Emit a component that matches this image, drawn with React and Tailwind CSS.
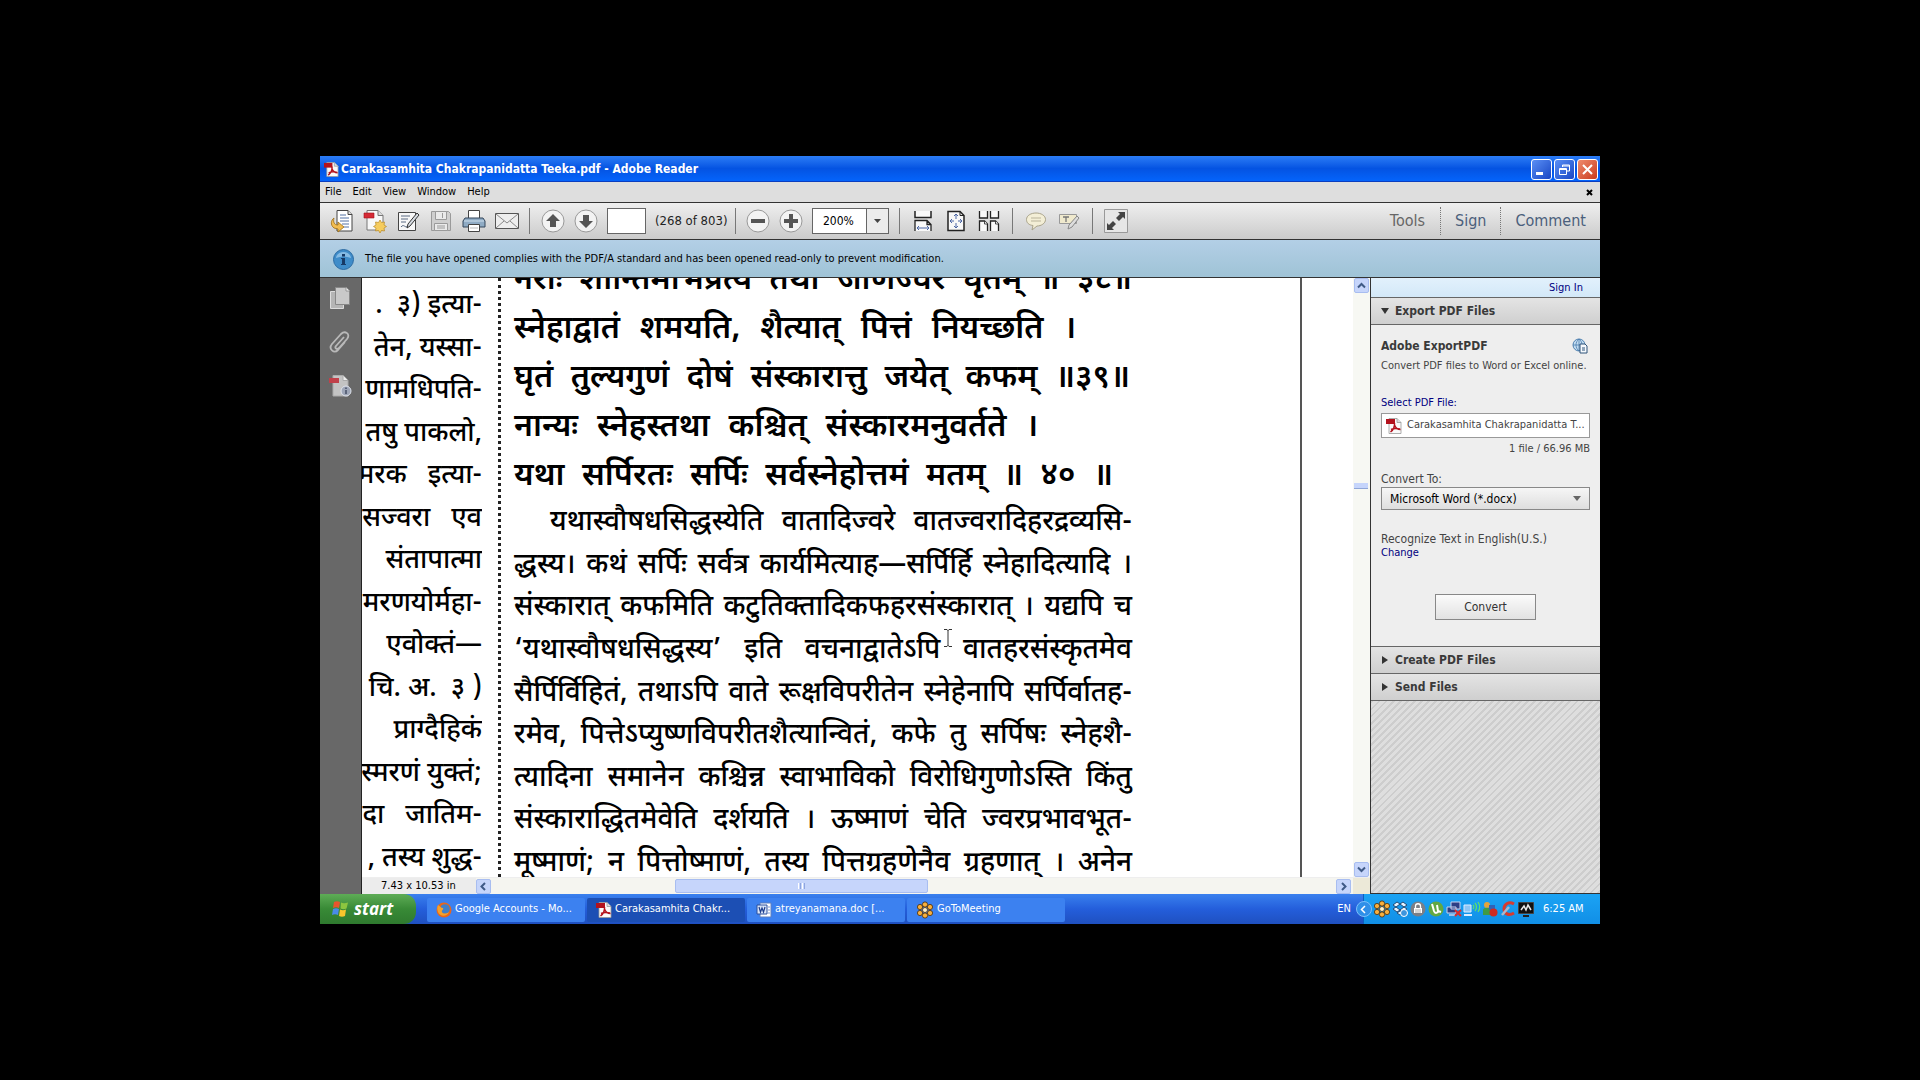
import React, { useState } from "react";

const verses = [
  { text: "स्नेहाद्वातं शमयति, शैत्यात् पित्तं नियच्छति ।", width: "w-[562px]" },
  { text: "घृतं तुल्यगुणं दोषं संस्कारात्तु जयेत् कफम् ॥३९॥", width: "w-[616px]" },
  { text: "नान्यः स्नेहस्तथा कश्चित् संस्कारमनुवर्तते ।", width: "w-[524px]" },
  { text: "यथा सर्पिरतः सर्पिः सर्वस्नेहोत्तमं मतम् ॥ ४० ॥", width: "w-[599px]" },
];

const commentary = [
  "यथास्वौषधसिद्धस्येति वातादिज्वरे वातज्वरादिहरद्रव्यसि-",
  "द्धस्य। कथं सर्पिः सर्वत्र कार्यमित्याह—सर्पिर्हि स्नेहादित्यादि ।",
  "संस्कारात् कफमिति कटुतिक्तादिकफहरसंस्कारात् । यद्यपि च",
  "‘यथास्वौषधसिद्धस्य’ इति वचनाद्वातेऽपि वातहरसंस्कृतमेव",
  "सैर्पिर्विहितं, तथाऽपि वाते रूक्षविपरीतेन स्नेहेनापि सर्पिर्वातह-",
  "रमेव, पित्तेऽप्युष्णविपरीतशैत्यान्वितं, कफे तु सर्पिषः स्नेहशै-",
  "त्यादिना समानेन कश्चिन्न स्वाभाविको विरोधिगुणोऽस्ति किंतु",
  "संस्काराद्धितमेवेति दर्शयति । ऊष्माणं चेति ज्वरप्रभावभूत-",
  "मूष्माणं; न पित्तोष्माणं, तस्य पित्तग्रहणेनैव ग्रहणात् । अनेन",
];

const leftColumn = [
  ".  ३) इत्या-",
  "तेन, यस्सा-",
  "णामधिपति-",
  "तषु पाकलो,",
  "मरक   इत्या-",
  "सज्वरा   एव",
  "संतापात्मा",
  "मरणयोर्महा-",
  "एवोक्तं—",
  "चि. अ.  ३ )",
  "प्राग्दैहिकं",
  "स्मरणं युक्तं;",
  "दा   जातिम-",
  ", तस्य शुद्ध-",
];

const PdfIcon = ({ size = 16 }) => (
  <svg width={size} height={size} viewBox="0 0 16 16">
    <path d="M3 .5h8l4 4v11H3z" fill="#fafafa" stroke="#999" strokeWidth=".8" />
    <path d="M11 .5v4h4" fill="#ddd" stroke="#999" strokeWidth=".8" />
    <path d="M0 1h9v5H0z" fill="#b3121d" />
    <path d="M8.500 5c.5 4-1.500 7-4 9M8.500 7c1 3 3 4.500 6 4.500M5 11.500c3-1.500 5-1.500 9-.5" fill="none" stroke="#b3121d" strokeWidth="1.500" />
  </svg>
);

const ExportIcon = () => (
  <svg width="24" height="24" viewBox="0 0 24 24">
    <path d="M7 1.500h11l4 4V22H7z" fill="#fff" stroke="#444" />
    <path d="M18 1.500v4h4" fill="#ddd" stroke="#444" />
    <path d="M10 6h6M10 9h9M10 12h9M12 15h7M14 18h5" stroke="#5573a5" />
    <path d="M4 9C1 11 0 16 4 19l4 1v3l6-5-6-5v3c-4 0-5-3-4-7z" fill="#f2bd52" stroke="#9a6c15" strokeWidth=".8" />
  </svg>
);

const CreateIcon = () => (
  <svg width="24" height="24" viewBox="0 0 24 24">
    <path d="M4 1.500h11l5 5V21H4z" fill="#f8f8f8" stroke="#777" />
    <path d="M15 1.500v5h5" fill="#ddd" stroke="#777" />
    <path d="M1 4h10v5H1z" fill="#d42a35" stroke="#a3121c" strokeWidth=".6" />
    <path d="M17 11l1.500 2.500 3-.5-.5 3 2.500 1.500-2.500 1.500.5 3-3-.5L17 24l-1.500-2.500-3 .5.5-3-2.500-1.500L13 16l-.5-3 3 .5z" fill="#f6cc5d" stroke="#b98a26" strokeWidth=".7" />
  </svg>
);

const EditIcon = () => (
  <svg width="24" height="24" viewBox="0 0 24 24">
    <path d="M2.500 3.500h17v18h-17z" fill="#f8f8f8" stroke="#444" />
    <path d="M5 7h9M5 10h7M5 13h5M5 18c3-4 4 2 7-1" fill="none" stroke="#5b6b83" />
    <path d="M21 4l2 2-9 11-3 2 1-4z" fill="#d7dce2" stroke="#333" />
  </svg>
);

const SaveIcon = () => (
  <svg width="24" height="24" viewBox="0 0 24 24" stroke="#9a9a9a">
    <path d="M2.500 2.500h17l2 2v17h-19z" fill="#cfcfcf" />
    <path d="M6.500 2.500h11v8h-11zM5.500 14.500h13v7h-13z" fill="#eaeaea" />
    <path d="M13.500 4v5M8 17h8M8 19h8" />
  </svg>
);

const PrintIcon = () => (
  <svg width="24" height="24" viewBox="0 0 24 24">
    <path d="M6.500 1.500h11v9h-11z" fill="#fff" stroke="#444" />
    <path d="M3 9h18l2 3v6H1v-6z" fill="#8fabc4" stroke="#34465a" />
    <path d="M2 12h20" stroke="#cfe0ee" />
    <path d="M6.500 15.500h11v7h-11z" fill="#fff" stroke="#444" />
    <path d="M8 19h8" stroke="#bbb" />
  </svg>
);

const MailIcon = () => (
  <svg width="24" height="24" viewBox="0 0 24 24" fill="none">
    <path d="M.5 4.500h23v15H.5z" fill="#eee" stroke="#555" />
    <path d="M1 5l11 9L23 5M1 19l8-7M23 19l-8-7" stroke="#888" />
  </svg>
);

const RoundIcon = ({ d }) => (
  <svg width="24" height="24" viewBox="0 0 24 24">
    <circle cx="12" cy="12" r="11" fill="#f3f3f3" stroke="#999" />
    <path d={d} fill="#555" />
  </svg>
);

const FitWidthIcon = () => (
  <svg width="20" height="22" viewBox="0 0 20 22" fill="none">
    <path d="M2 1v6.500h16V1" stroke="#222" strokeWidth="1.500" fill="#f8f8f8" />
    <path d="M2 21V10.500h12l4 4V21M14 10.500v4h4" stroke="#222" strokeWidth="1.300" fill="#f8f8f8" />
    <path d="M4 18h12M6 16l-2 2 2 2M14 16l2 2-2 2" stroke="#4c67a5" />
  </svg>
);

const FitPageIcon = () => (
  <svg width="20" height="22" viewBox="0 0 20 22" fill="none">
    <path d="M2 1.500h12l4 4v15H2z" stroke="#222" strokeWidth="1.500" fill="#f8f8f8" />
    <path d="M14 1.500v4h4" stroke="#222" />
    <path d="M10 4v5M10 13v5M4 11h4M12 11h4M8 6l2-2 2 2M8 16l2 2 2-2M6 9l-2 2 2 2M14 9l2 2-2 2" stroke="#4c67a5" />
  </svg>
);

const TwoPagesIcon = () => (
  <svg width="22" height="22" viewBox="0 0 22 22" stroke="#222" strokeWidth="1.300" fill="#f8f8f8">
    <path d="M1.500 1v7h8V1M12.500 1v7h8V1" />
    <path d="M1.500 21V11h5l3 3v7M12.500 21V11h5l3 3v7" />
    <path d="M6.500 11v3h3M17.500 11v3h3" strokeWidth=".8" />
  </svg>
);

const CommentIcon = () => (
  <svg width="22" height="20" viewBox="0 0 22 20">
    <path d="M11 2c5 0 9.500 2.500 9.500 6.500S16 15 12 15l-5 4 1-4.500C4 14 1.500 12 1.500 8.500 1.500 4.500 6 2 11 2z" fill="#f3eed6" stroke="#a9a38a" />
    <path d="M6 7h10M6 10h10" stroke="#b9b39a" />
  </svg>
);

const HighlightIcon = () => (
  <svg width="22" height="20" viewBox="0 0 22 20">
    <path d="M1.500 3.500h17v9h-17z" fill="#efe9cd" stroke="#999" />
    <path d="M5 6h6M8 6v5" stroke="#777" strokeWidth="1.300" />
    <path d="M19 5l2 2-7 9-4 2 1-4z" fill="#ddd" stroke="#888" />
  </svg>
);

const ExpandIcon = () => (
  <svg width="24" height="24" viewBox="0 0 24 24">
    <path d="M.5.5h23v23H.5z" fill="#e6e6e6" stroke="#999" />
    <path d="M14 3h7v7l-2-2-4 4-3-3 4-4zM10 21H3v-7l2 2 4-4 3 3-4 4z" fill="#444" />
  </svg>
);

const FlowerIcon = () => (
  <svg width="18" height="18" viewBox="0 0 18 18">
    <g fill="#f9b03d" stroke="#4a2c08" strokeWidth=".8">
      <circle cx="9" cy="3.500" r="2.600" />
      <circle cx="9" cy="14.500" r="2.600" />
      <circle cx="4" cy="6" r="2.600" />
      <circle cx="14" cy="6" r="2.600" />
      <circle cx="4" cy="12" r="2.600" />
      <circle cx="14" cy="12" r="2.600" />
    </g>
    <circle cx="9" cy="9" r="2.500" fill="#fff2c9" stroke="#4a2c08" strokeWidth=".8" />
  </svg>
);

const FirefoxIcon = () => (
  <svg width="16" height="16" viewBox="0 0 16 16">
    <circle cx="8" cy="8" r="7.500" fill="#e8661b" />
    <circle cx="9" cy="7" r="4.800" fill="#3f7fc9" />
    <path d="M2 3c2 1 3 3 5 3 1 2-2 2-1 4s4 2 7 0c-2 5-9 5-11 0-1-3-1-5 0-7z" fill="#f4a12c" />
  </svg>
);

const WordIcon = () => (
  <svg width="16" height="16" viewBox="0 0 16 16">
    <path d="M4 1h11v14H4z" fill="#fff" stroke="#5d7fc0" />
    <path d="M1 3h10v9H1z" fill="#dbe6f8" stroke="#2a4f9f" />
    <path d="M3 5l1.500 5L6 6l1.500 4L9 5" fill="none" stroke="#1f3f8f" strokeWidth="1.200" />
    <path d="M12 5h2M12 8h2M12 11h2" stroke="#7c98d0" />
  </svg>
);

const FlagIcon = () => (
  <svg width="18" height="18" viewBox="0 0 18 18">
    <path d="M3 2c2-1 4-1 6 0L8 8C6 7 4 7 2 8z" fill="#e8552d" />
    <path d="M10 2.500c2 1 4 1 7 0L15.500 8.500c-2 1-4 1-6 0z" fill="#8cc63f" />
    <path d="M2 9c2-1 4-1 6 0l-1 6c-2-1-4-1-6 0z" fill="#4a8be8" />
    <path d="M9 9.500c2 1 4 1 6 0L14 16c-2 1-4 1-6 0z" fill="#f8c62c" />
  </svg>
);

const trayIcons = [
  <FlowerIcon key="flower" />,
  <svg key="dropbox" width="16" height="16" viewBox="0 0 16 16">
    <path d="M5 1l3 2-4 3-3-2zM11 1L8 3l4 3 3-2zM1 8l3-2 4 3-3 2zM15 8l-3-2-4 3 3 2zM5 12l3-2 3 2-3 2z" fill="#e6f3ff" stroke="#1b3e68" strokeWidth=".9" />
    <circle cx="12" cy="12" r="3.500" fill="#3d95dd" stroke="#fff" />
  </svg>,
  <svg key="lock" width="16" height="16" viewBox="0 0 16 16">
    <circle cx="8" cy="8" r="7.500" fill="#7b7f86" />
    <path d="M5.500 7V5c0-3 5-3 5 0v2" fill="none" stroke="#fff" strokeWidth="1.300" />
    <path d="M4 7h8v5H4z" fill="#fff" />
    <path d="M5 9h6M5 11h6" stroke="#888" strokeWidth=".7" />
  </svg>,
  <svg key="torrent" width="16" height="16" viewBox="0 0 16 16">
    <circle cx="8" cy="8" r="7.500" fill="#62a843" />
    <path d="M4 3l2 7c1 3 4 2 4 0L9 4M10 10l3 1" fill="none" stroke="#fff" strokeWidth="2" />
  </svg>,
  <svg key="net" width="16" height="16" viewBox="0 0 16 16">
    <path d="M5 1h9v7H5zM1 6h9v6H1z" fill="#2c3f85" stroke="#c8d2ee" />
    <path d="M3 14h6" stroke="#c8d2ee" strokeWidth="1.500" />
    <path d="M9 9l6 6M15 9l-6 6" stroke="#d92d2d" strokeWidth="2" />
  </svg>,
  <svg key="wifi" width="18" height="16" viewBox="0 0 18 16" fill="none">
    <path d="M1 4h7v7H1z" fill="#8ec5f5" stroke="#dcecff" />
    <path d="M1 14h8" stroke="#dcecff" strokeWidth="2" />
    <path d="M10 4c1 1 1 3 0 4M12 2c2 2 2 6 0 8M15 1c2 3 2 7 0 10" stroke="#5fe06b" strokeWidth="1.300" />
  </svg>,
  <svg key="people" width="16" height="16" viewBox="0 0 16 16">
    <circle cx="5" cy="4" r="3" fill="#e2a33c" />
    <path d="M1 14V9c0-3 8-3 8 0v5z" fill="#3f9a45" />
    <path d="M7 4h6v5H7z" fill="#2f62b8" />
    <circle cx="11.500" cy="11.500" r="4" fill="#cf2a20" />
  </svg>,
  <svg key="cleaner" width="16" height="16" viewBox="0 0 16 16" fill="none">
    <path d="M14 3C9 0 4 3 4 8s5 7 10 4" stroke="#d63b2f" strokeWidth="3" />
    <path d="M9 6l-7 8" stroke="#a9b9cf" strokeWidth="2.500" />
  </svg>,
  <svg key="monitor" width="16" height="16" viewBox="0 0 16 16">
    <path d="M.5 1.500h15v11H.5z" fill="#111" stroke="#444" />
    <path d="M3 9l3-4 2 4 2-5 3 5" fill="none" stroke="#e9e9e9" strokeWidth="1.500" />
    <path d="M5 15h6" stroke="#222" strokeWidth="2" />
  </svg>,
];

const ToolButton = ({ label, children }) => (
  <button aria-label={label} className="w-[33px] h-[28px] shrink-0 flex items-center justify-center">
    {children}
  </button>
);

const Separator = ({ className = "" }) => <span className={`w-px h-[26px] shrink-0 bg-[#777] ${className}`} />;

const ScrollButton = ({ label, d }) => (
  <button
    aria-label={label}
    className="w-[15px] h-[15px] shrink-0 flex items-center justify-center rounded-xs border border-[#a8bdf0] bg-[#c6d5fb]"
  >
    <svg width="9" height="9" viewBox="0 0 9 9" fill="none">
      <path d={d} stroke="#3f5a86" strokeWidth="2" />
    </svg>
  </button>
);

const TitleBar = () => (
  <div className="h-[26px] flex items-center pt-px pl-[4px] pr-[2px] bg-linear-to-b from-[#2b7cf6] via-[#0453e2] to-[#0464fb] border-b border-[#0a3dbf]">
    <PdfIcon size={15} />
    <h1 className="ml-[2px] flex-1 text-[12px] font-bold text-white whitespace-nowrap">
      Carakasamhita Chakrapanidatta Teeka.pdf - Adobe Reader
    </h1>
    <div className="flex gap-[2px]">
      <button aria-label="Minimize" className="w-[21px] h-[21px] rounded-[3px] border border-white bg-linear-to-br from-[#5b8ff5] to-[#1a45c4] flex items-end p-[4px]">
        <span className="w-[7px] h-[3px] bg-white" />
      </button>
      <button aria-label="Restore" className="w-[21px] h-[21px] rounded-[3px] border border-white bg-linear-to-br from-[#5b8ff5] to-[#1a45c4] flex items-center justify-center">
        <svg width="11" height="11" viewBox="0 0 11 11" fill="none" stroke="#fff">
          <path d="M3.500 3V1h7v6H8M.5 4.500h7v6h-7zM1 5.500h6M4 2h6" />
        </svg>
      </button>
      <button aria-label="Close" className="w-[21px] h-[21px] rounded-[3px] border border-white bg-linear-to-br from-[#ee8a6c] to-[#c9381a] flex items-center justify-center">
        <svg width="11" height="11" viewBox="0 0 11 11">
          <path d="M1 1l9 9M10 1l-9 9" stroke="#fff" strokeWidth="2" />
        </svg>
      </button>
    </div>
  </div>
);

const MenuBar = () => (
  <div className="h-[21px] flex items-center pl-[5px] pr-[7px] gap-[11px] bg-[#dedede] border-b border-[#333] text-[11px] text-black">
    {["File", "Edit", "View", "Window", "Help"].map((item) => (
      <button key={item}>{item}</button>
    ))}
    <button aria-label="Close document" className="ml-auto">
      <svg width="7" height="7" viewBox="0 0 7 7">
        <path d="M1 1l5 5M6 1L1 6" stroke="#000" strokeWidth="2" />
      </svg>
    </button>
  </div>
);

const Toolbar = () => {
  const [page, setPage] = useState("");
  return (
    <div className="h-[37px] flex items-center pl-[5px] border-b border-[#333] bg-linear-to-b from-[#efefef] to-[#cbcbcb]">
      <ToolButton label="Export"><ExportIcon /></ToolButton>
      <ToolButton label="Create PDF"><CreateIcon /></ToolButton>
      <ToolButton label="Edit"><EditIcon /></ToolButton>
      <ToolButton label="Save"><SaveIcon /></ToolButton>
      <ToolButton label="Print"><PrintIcon /></ToolButton>
      <ToolButton label="Email"><MailIcon /></ToolButton>
      <Separator className="mx-[6px]" />
      <ToolButton label="Previous page"><RoundIcon d="M12 5l7 7h-4v6H9v-6H5z" /></ToolButton>
      <ToolButton label="Next page"><RoundIcon d="M12 19l7-7h-4V6H9v6H5z" /></ToolButton>
      <input
        aria-label="Page number"
        value={page}
        onChange={(e) => setPage(e.target.value)}
        className="ml-[5px] w-[39px] h-[26px] shrink-0 border border-[#666] bg-white px-1 text-[13px]"
      />
      <span className="ml-[9px] w-[80px] shrink-0 text-[13px] text-[#222] whitespace-nowrap">(268 of 803)</span>
      <Separator className="mr-[5px]" />
      <ToolButton label="Zoom out"><RoundIcon d="M5 10h14v4H5z" /></ToolButton>
      <ToolButton label="Zoom in"><RoundIcon d="M5 10h5V5h4v5h5v4h-5v5h-4v-5H5z" /></ToolButton>
      <div className="ml-[5px] w-[77px] h-[26px] shrink-0 flex border border-[#666] bg-white relative">
        <select aria-label="Zoom" className="w-full appearance-none pl-[10px] text-[12px] text-black outline-none">
          <option>200%</option>
        </select>
        <span className="absolute right-0 inset-y-0 w-[22px] border-l border-[#666] bg-[#ececec] flex items-center justify-center pointer-events-none">
          <svg width="7" height="4" viewBox="0 0 7 4"><path d="M0 0h7L3.500 4z" fill="#444" /></svg>
        </span>
      </div>
      <Separator className="ml-[10px] mr-[6px]" />
      <ToolButton label="Fit width"><FitWidthIcon /></ToolButton>
      <ToolButton label="Fit page"><FitPageIcon /></ToolButton>
      <ToolButton label="Two pages"><TwoPagesIcon /></ToolButton>
      <Separator className="ml-[7px] mr-[6px]" />
      <ToolButton label="Add comment"><CommentIcon /></ToolButton>
      <ToolButton label="Highlight text"><HighlightIcon /></ToolButton>
      <Separator className="ml-[7px] mr-[6px]" />
      <ToolButton label="Read mode"><ExpandIcon /></ToolButton>
      <div className="ml-auto flex items-center text-[16px] text-[#4b5f7c]">
        <button className="px-[15px] text-[#666]">Tools</button>
        <button className="px-[14px] h-[28px] border-x border-dotted border-[#777]">Sign</button>
        <button className="px-[14px]">Comment</button>
      </div>
    </div>
  );
};

const PdfPage = () => (
  <div className="relative flex-1 min-w-0 flex bg-white overflow-hidden text-black font-['Noto_Sans_Devanagari','Noto_Sans','FreeSans',sans-serif]">
    <div className="w-[120px] shrink-0 h-[603px] pt-[8px] flex flex-col justify-between overflow-hidden text-[27px] leading-[42px] font-medium">
      {leftColumn.map((line) => (
        <p key={line} className="flex justify-end whitespace-pre">{line}</p>
      ))}
    </div>
    <div className="ml-[16px] w-[16px] shrink-0 border-l-3 border-dotted border-[#222]" />
    <div className="w-[618px] shrink-0 h-[607px] flex flex-col">
      <div className="h-[28px] shrink-0 flex items-end overflow-hidden text-[32px] leading-[49px] font-semibold">
        <p className="w-full whitespace-nowrap text-justify [text-align-last:justify]">
          नराः शान्तिमभिप्रेत्य तथा जीर्णज्वरे घृतम् ॥ ३८॥
        </p>
      </div>
      <div className="text-[32px] leading-[49px] font-semibold">
        {verses.map((line) => (
          <p key={line.text} className={`${line.width} whitespace-nowrap text-justify [text-align-last:justify]`}>
            {line.text}
          </p>
        ))}
      </div>
      <div className="flex-1 flex flex-col justify-between text-[28px] leading-[42px] font-medium">
        {commentary.map((line) => (
          <p key={line} className="whitespace-nowrap text-justify [text-align-last:justify] first:pl-[36px]">
            {line}
          </p>
        ))}
      </div>
    </div>
    <div className="ml-auto w-[53px] shrink-0 border-l-2 border-[#555]" />
    <svg className="absolute left-[582px] top-[351px]" width="8" height="18" viewBox="0 0 8 18">
      <path d="M0 .5h3l1 1 1-1h3M4 1v16M0 17.500h3l1-1 1 1h3" fill="none" stroke="#333" />
    </svg>
  </div>
);

const DocumentArea = () => (
  <div className="flex-1 min-w-0 flex flex-col">
    <div className="flex-1 min-h-0 flex">
      <PdfPage />
      <div className="w-[17px] shrink-0 flex flex-col items-center bg-[#f7f8f3]">
        <ScrollButton label="Scroll up" d="M1 6.500l3.500-3.500L8 6.500" />
        <div className="mt-[190px] w-[14px] h-[6px] bg-[#c6d5fb] border-b border-[#8fa6d8]" />
        <div className="mt-auto flex">
          <ScrollButton label="Scroll down" d="M1 2.500L4.500 6 8 2.500" />
        </div>
      </div>
    </div>
    <div className="h-[17px] shrink-0 flex items-center bg-[#f5f5f0] border-t border-[#eee]">
      <span className="w-[114px] h-full flex items-center pl-[19px] bg-[#ececec] text-[11px] text-black whitespace-nowrap">7.43 x 10.53 in</span>
      <ScrollButton label="Scroll left" d="M6 1L2.500 4.500 6 8" />
      <div className="flex-1 h-[15px] flex">
        <div className="ml-[184px] w-[30%] h-[14px] flex items-center justify-center gap-px rounded-xs bg-[#c6d5fb] border border-[#a8bdf0]">
          <span className="w-px h-[6px] bg-white" />
          <span className="w-px h-[6px] bg-[#8fa6e0]" />
          <span className="w-px h-[6px] bg-white" />
          <span className="w-px h-[6px] bg-[#8fa6e0]" />
        </div>
      </div>
      <ScrollButton label="Scroll right" d="M3 1l3.500 3.500L3 8" />
      <span className="ml-[2px] w-[17px] h-full bg-[#ece9d8]" />
    </div>
  </div>
);

const PanelHeader = ({ children, open }) => (
  <button className="w-full h-[27px] flex items-center pl-[10px] gap-[6px] border-b border-[#666] bg-linear-to-b from-[#e4e4e4] to-[#cfcfcf] text-[12px] font-bold text-[#3a3a3a]">
    <svg width="8" height="8" viewBox="0 0 8 8">
      <path d={open ? "M0 1h8L4 7z" : "M1 0v8l6-4z"} fill="#333" />
    </svg>
    {children}
  </button>
);

const SidePanel = () => (
  <aside className="w-[230px] shrink-0 flex flex-col border-l border-[#333] bg-[#eee] text-[11px] text-[#444]">
    <div className="h-[20px] shrink-0 flex items-center justify-end pt-[2px] pr-[17px] border-b border-[#666] bg-linear-to-b from-[#e2f1fc] to-[#d3e8f8]">
      <a href="#signin" className="text-[#000080]">Sign In</a>
    </div>
    <PanelHeader open>Export PDF Files</PanelHeader>
    <div className="h-[322px] shrink-0 flex flex-col px-[10px] pt-[12px] border-b border-[#666]">
      <div className="flex items-center justify-between pr-[2px]">
        <h2 className="text-[12px] leading-[18px] font-bold text-[#3a3a3a]">Adobe ExportPDF</h2>
        <svg width="16" height="16" viewBox="0 0 16 16" fill="none">
          <circle cx="7" cy="7" r="6" fill="#c3dcf1" stroke="#4b7eae" />
          <path d="M1 7h12M7 1v12M7 1C3 4 3 10 7 13M7 1c4 3 4 9 0 12" stroke="#4b7eae" strokeWidth=".8" />
          <path d="M8 6h5l2 2v7H8z" fill="#f5f9fd" stroke="#2f5379" />
          <path d="M10 10h3M10 12h3" stroke="#2f5379" />
        </svg>
      </div>
      <p className="mt-[3px] leading-[16px] whitespace-nowrap">Convert PDF files to Word or Excel online.</p>
      <label htmlFor="pdf-file" className="mt-[21px] leading-[16px] text-[#000080]">Select PDF File:</label>
      <div className="mt-[2px] h-[25px] flex items-center pl-[4px] border border-[#999] bg-white">
        <PdfIcon />
        <input
          id="pdf-file"
          readOnly
          value="Carakasamhita Chakrapanidatta T..."
          className="ml-[5px] flex-1 min-w-0 bg-transparent outline-none"
        />
      </div>
      <p className="mt-[3px] leading-[16px] text-right">1 file / 66.96 MB</p>
      <label htmlFor="convert-to" className="mt-[14px] leading-[16px] text-[12px]">Convert To:</label>
      <div className="relative h-[23px] flex">
        <select
          id="convert-to"
          className="w-full appearance-none border border-[#888] bg-linear-to-b from-[#f6f6f6] to-[#dedede] pl-[8px] text-[12px] text-black outline-none"
        >
          <option>Microsoft Word (*.docx)</option>
        </select>
        <svg className="absolute right-[9px] top-[9px] pointer-events-none" width="8" height="5" viewBox="0 0 8 5">
          <path d="M0 0h8L4 5z" fill="#666" />
        </svg>
      </div>
      <p className="mt-[23px] leading-[13px] text-[12px] whitespace-nowrap">Recognize Text in English(U.S.)</p>
      <a href="#change" className="leading-[13px] self-start text-[#000080]">Change</a>
      <button className="mt-[35px] self-center w-[101px] h-[26px] border border-[#888] bg-linear-to-b from-[#fbfbfb] to-[#e2e2e2] text-[12px] text-[#333]">
        Convert
      </button>
    </div>
    <PanelHeader>Create PDF Files</PanelHeader>
    <PanelHeader>Send Files</PanelHeader>
    <div className="flex-1 bg-[repeating-linear-gradient(135deg,#cdcdcd_0_2px,#dedede_2px_5px)] border-b border-[#333]" />
  </aside>
);

const tasks = [
  { label: "Google Accounts - Mo...", icon: <FirefoxIcon /> },
  { label: "Carakasamhita Chakr...", icon: <PdfIcon />, active: true },
  { label: "atreyanamana.doc [...", icon: <WordIcon /> },
  { label: "GoToMeeting", icon: <FlowerIcon /> },
];

const Taskbar = () => (
  <div className="h-[30px] flex items-center bg-linear-to-b from-[#3a80ee] via-[#245edb] to-[#1f50c0] text-[11px] text-white">
    <button className="w-[96px] h-full shrink-0 flex items-center pl-[11px] gap-[5px] rounded-r-xl bg-linear-to-b from-[#5eac56] via-[#388a36] to-[#2f7a2f] font-['Open_Sans',sans-serif] text-[17px] font-bold italic">
      <FlagIcon />
      start
    </button>
    <div className="ml-[11px] pt-px flex-1 min-w-0 flex gap-[2px]">
      {tasks.map((task) => (
        <button
          key={task.label}
          className={`w-[158px] h-[24px] flex items-center pl-[9px] gap-[3px] rounded-xs whitespace-nowrap ${
            task.active ? "bg-[#1c4fb4]" : "bg-[#3c81f0]"
          }`}
        >
          {task.icon}
          {task.label}
        </button>
      ))}
    </div>
    <span className="mr-[5px]">EN</span>
    <button aria-label="Show hidden icons" className="z-10 mr-[-9px] w-[16px] h-[16px] rounded-full bg-[#2f8fe8] border border-[#7cc0fa] flex items-center justify-center">
      <svg width="7" height="9" viewBox="0 0 7 9" fill="none"><path d="M5 1L1.500 4.500 5 8" stroke="#fff" strokeWidth="1.500" /></svg>
    </button>
    <div className="w-[237px] h-full shrink-0 flex items-center pl-[9px] bg-linear-to-b from-[#1ba3f4] to-[#118fe6] border-l border-[#0d5fc0]">
      {trayIcons.map((icon) => (
        <span key={icon.key} className="w-[18px] flex justify-center">{icon}</span>
      ))}
      <time className="ml-[8px]">6:25 AM</time>
    </div>
  </div>
);

const App = () => {
  return (
    <div className="min-h-screen bg-black flex items-center justify-center">
      <main className="w-2/3 min-w-[1180px] overflow-hidden font-['DejaVu_Sans_Condensed','DejaVu_Sans',sans-serif]">
        <TitleBar />
        <MenuBar />
        <Toolbar />
        <div className="h-[38px] flex items-center pt-px pl-[13px] gap-[11px] border-b border-[#333] bg-linear-to-b from-[#b3cfe6] to-[#9fc3d6] text-[11px] text-black">
          <svg width="21" height="21" viewBox="0 0 21 21">
            <circle cx="10.500" cy="10.500" r="10" fill="#3f8cc9" stroke="#2c6ba3" />
            <path d="M3 9c1-8 14-8 15 0-5-2-10-2-15 0z" fill="#85bbe4" />
            <path d="M8 9h4v6h1v1H8v-1h1v-5H8zM9 5h3v2.500H9z" fill="#173a66" />
          </svg>
          <p className="whitespace-nowrap">
            The file you have opened complies with the PDF/A standard and has been opened read-only to prevent modification.
          </p>
        </div>
        <div className="h-[616px] flex">
          <nav className="w-[42px] shrink-0 flex flex-col items-center pt-[8px] pr-[2px] gap-[20px] bg-[#686868] border-r border-[#222]">
            <button aria-label="Page thumbnails">
              <svg width="22" height="24" viewBox="0 0 22 24">
                <path d="M1.500 5.500h13v17h-13z" fill="#b5b5b5" stroke="#ddd" />
                <path d="M6.500 1.500h11l3 3v14h-14z" fill="#c9c9c9" stroke="#888" />
                <path d="M17 1.500v3.500h3.500" fill="#eee" stroke="#888" strokeWidth=".8" />
              </svg>
            </button>
            <button aria-label="Attachments">
              <svg width="22" height="24" viewBox="0 0 22 24" fill="none">
                <path d="M15 7l-8 9c-2 2 1 4 3 2l8-9c4-5-2-9-6-5l-9 10c-4 5 2 10 6 6l7-8" stroke="#b9b9b9" strokeWidth="1.800" />
              </svg>
            </button>
            <button aria-label="Standards">
              <svg width="24" height="24" viewBox="0 0 24 24">
                <path d="M5 1.500h10l5 5V22H5z" fill="#c3c3c3" stroke="#aaa" />
                <path d="M15 1.500v5h5" fill="#eee" stroke="#aaa" />
                <path d="M1 4h10v5H1z" fill="#c0414a" />
                <circle cx="18" cy="17" r="5" fill="#9ea6b8" stroke="#dfe3ec" />
                <path d="M18 16v4M18 13.500V15" stroke="#454f66" strokeWidth="1.500" />
              </svg>
            </button>
          </nav>
          <DocumentArea />
          <SidePanel />
        </div>
        <Taskbar />
      </main>
    </div>
  );
};

export default App;
